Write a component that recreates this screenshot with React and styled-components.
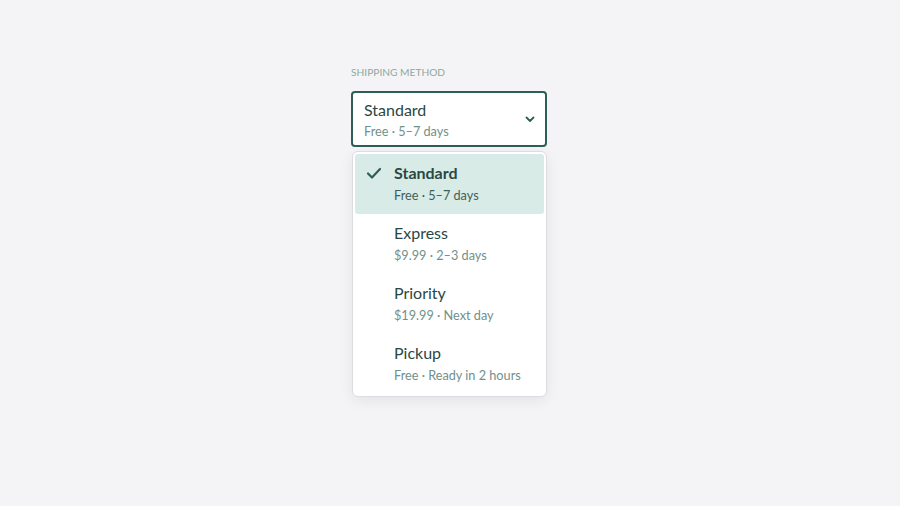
import React, { useState } from "react";
import styled, { createGlobalStyle } from "styled-components";

const GlobalStyle = createGlobalStyle`
  html, body {
    margin: 0;
    padding: 0;
    background: #f4f4f6;
    font-family: Lato, "Open Sans", "Liberation Sans", sans-serif;
  }
`;

const Page = styled.div`
  width: 900px;
  height: 506px;
  display: flex;
  justify-content: center;
  padding-top: 66px;
  box-sizing: border-box;
  padding-right: 2px;
`;

const Field = styled.div`
  width: 196px;
  display: flex;
  flex-direction: column;
`;

const Label = styled.div`
  font-size: 10.2px;
  color: #8ea99f;
  line-height: 13px;
  margin-bottom: 12px;
`;

const Trigger = styled.button`
  display: flex;
  align-items: center;
  justify-content: space-between;
  height: 56px;
  width: 196px;
  box-sizing: border-box;
  padding: 0 10px 0 11px;
  background: #fff;
  border: 2px solid #2e5e55;
  border-radius: 4px;
  font-family: inherit;
  text-align: left;
  cursor: pointer;
`;

const TriggerText = styled.div`
  display: flex;
  flex-direction: column;
`;

const Title = styled.span`
  font-size: 16px;
  line-height: 20px;
  color: #2a4843;
  font-weight: ${({ selected }) => (selected ? 700 : 400)};
`;

const Sub = styled.span`
  font-size: 12.7px;
  line-height: 16px;
  margin-top: ${({ gap }) => gap || 4}px;
  color: ${({ selected }) => (selected ? "#3f5f58" : "#70918a")};
`;

const Menu = styled.ul`
  list-style: none;
  margin: 4px 0 0 1px;
  padding: 2px;
  width: 195px;
  box-sizing: border-box;
  background: #fff;
  border: 1px solid #dcdde0;
  border-radius: 6px;
  box-shadow: 0 4px 14px rgba(0, 0, 0, 0.07);
`;

const Item = styled.li`
  display: flex;
  align-items: flex-start;
  height: 60px;
  box-sizing: border-box;
  padding: 9px 0 0 0;
  background: ${({ selected }) => (selected ? "#d9ebe7" : "transparent")};
  border-radius: 3px;
  cursor: pointer;
`;

const CheckSlot = styled.div`
  width: 39px;
  display: flex;
  justify-content: center;
  padding-top: 4px;
  padding-right: 2px;
  box-sizing: border-box;
`;

const ItemText = styled.div`
  display: flex;
  flex-direction: column;
`;

const options = [
  { name: "Standard", detail: "Free · 5–7 days" },
  { name: "Express", detail: "$9.99 · 2–3 days" },
  { name: "Priority", detail: "$19.99 · Next day" },
  { name: "Pickup", detail: "Free · Ready in 2 hours" },
];

const Check = () => (
  <svg width="16" height="13" viewBox="0 0 16 13" fill="none">
    <path
      d="M2 6.5 L6 10.5 L14 2"
      stroke="#2e5e55"
      strokeWidth="2.2"
      strokeLinecap="round"
      strokeLinejoin="round"
    />
  </svg>
);

const Chevron = () => (
  <svg width="10" height="7" viewBox="0 0 10 7" fill="none">
    <path
      d="M1.5 1.5 L5 5 L8.5 1.5"
      stroke="#2e5e55"
      strokeWidth="1.8"
      strokeLinecap="round"
      strokeLinejoin="round"
    />
  </svg>
);

export default function App() {
  const [selected, setSelected] = useState(0);
  const current = options[selected];
  return (
    <>
      <GlobalStyle />
      <Page>
        <Field>
          <Label>SHIPPING METHOD</Label>
          <Trigger>
            <TriggerText>
              <Title>{current.name}</Title>
              <Sub gap={3}>{current.detail}</Sub>
            </TriggerText>
            <Chevron />
          </Trigger>
          <Menu>
            {options.map((o, i) => (
              <Item key={o.name} selected={i === selected} onClick={() => setSelected(i)}>
                <CheckSlot>{i === selected && <Check />}</CheckSlot>
                <ItemText>
                  <Title selected={i === selected}>{o.name}</Title>
                  <Sub selected={i === selected}>{o.detail}</Sub>
                </ItemText>
              </Item>
            ))}
          </Menu>
        </Field>
      </Page>
    </>
  );
}
